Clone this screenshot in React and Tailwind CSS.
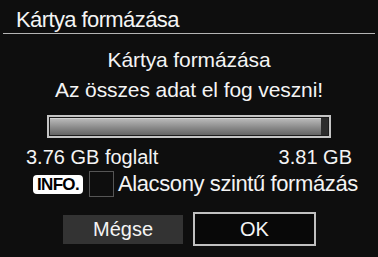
import React from "react";

export default function App() {
  return (
    <div
      className="w-[378px] h-[257px] bg-[#0e0e0e] text-[#f4f4f4] overflow-hidden"
      style={{ fontFamily: '"Liberation Sans", Arial, sans-serif' }}
    >
      {/* Header */}
      <div className="h-[33px] pt-[7px] pl-[16px] text-[22px] leading-[26px] tracking-[-0.6px]">
        Kártya formázása
      </div>
      <div className="mx-[3px] h-px bg-[#b4b4b4]" />

      {/* Message */}
      <div className="mt-[11px] text-center text-[21px] leading-[30px] tracking-[-0.1px]">
        <div>Kártya formázása</div>
        <div>Az összes adat el fog veszni!</div>
      </div>

      {/* Progress bar */}
      <div className="mt-[10px] ml-[47px] w-[284px] h-[23px] border-2 border-[#c4c4c4] p-px bg-[#1c1c1c] flex">
        <div className="flex-1 border-t border-[#d0d0d0] bg-linear-to-b from-[#b8b8b8] to-[#646464]" />
        <div className="w-[7px] bg-[#2c2c2c]" />
      </div>

      {/* Capacity */}
      <div className="mt-[7px] pl-[26px] pr-[26px] flex justify-between text-[20px] leading-[24px]">
        <span>3.76 GB foglalt</span>
        <span>3.81 GB</span>
      </div>

      {/* Low level option */}
      <div className="mt-[2px] pl-[33px] h-[26px] flex items-center">
        <span className="w-[50px] h-[19px] rounded-[4px] bg-white text-black font-bold text-[17px] leading-[19px] tracking-[-0.7px] text-center">
          INFO.
        </span>
        <span className="ml-[6px] w-[25px] h-[26px] border border-[#555555]" />
        <span className="ml-[4px] text-[22px] leading-[26px] tracking-[-0.4px]">
          Alacsony szintű formázás
        </span>
      </div>

      {/* Buttons */}
      <div className="mt-[15px] pl-[63px] h-[34px] flex items-center gap-[10px] text-[20px]">
        <div className="w-[120px] h-[29px] bg-[#333333] flex items-center justify-center">
          Mégse
        </div>
        <div className="w-[123px] h-[34px] border-2 border-[#c0c0c0] bg-[#080808] flex items-center justify-center">
          OK
        </div>
      </div>
    </div>
  );
}
